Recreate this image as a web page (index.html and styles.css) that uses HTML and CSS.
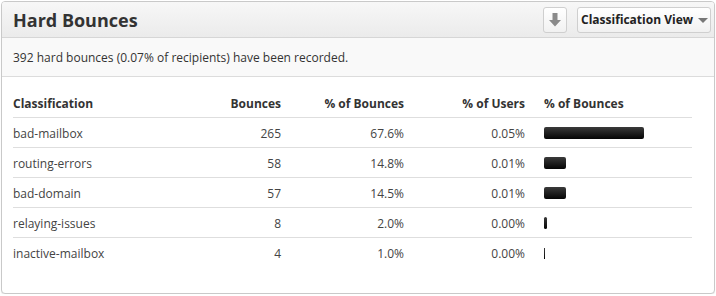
FILE: index.html
```html
<!DOCTYPE html>
<html>
<head>
<meta charset="utf-8">
<link rel="stylesheet" href="styles.css">
</head>
<body>
<div class="card">
  <div class="card-head">
    <h1 class="title">Hard Bounces</h1>
    <div class="actions">
      <button class="btn btn-icon" aria-label="Download">
        <svg width="12" height="14" viewBox="0 0 12 14"><path d="M3.5 0h5v7h3.5L6 13.5 0 7h3.5z" fill="#8a8a8a"/></svg>
      </button>
      <button class="btn btn-drop">Classification View <span class="caret"></span></button>
    </div>
  </div>
  <div class="summary">392 hard bounces (0.07% of recipients) have been recorded.</div>
  <div class="table">
    <div class="row head">
      <div class="c1">Classification</div>
      <div class="c2">Bounces</div>
      <div class="c3">% of Bounces</div>
      <div class="c4">% of Users</div>
      <div class="c5">% of Bounces</div>
    </div>
    <div class="row">
      <div class="c1">bad-mailbox</div><div class="c2">265</div><div class="c3">67.6%</div><div class="c4">0.05%</div>
      <div class="c5"><span class="bar" style="width:100px"></span></div>
    </div>
    <div class="row">
      <div class="c1">routing-errors</div><div class="c2">58</div><div class="c3">14.8%</div><div class="c4">0.01%</div>
      <div class="c5"><span class="bar" style="width:22px"></span></div>
    </div>
    <div class="row">
      <div class="c1">bad-domain</div><div class="c2">57</div><div class="c3">14.5%</div><div class="c4">0.01%</div>
      <div class="c5"><span class="bar" style="width:22px"></span></div>
    </div>
    <div class="row">
      <div class="c1">relaying-issues</div><div class="c2">8</div><div class="c3">2.0%</div><div class="c4">0.00%</div>
      <div class="c5"><span class="bar" style="width:3px"></span></div>
    </div>
    <div class="row last">
      <div class="c1">inactive-mailbox</div><div class="c2">4</div><div class="c3">1.0%</div><div class="c4">0.00%</div>
      <div class="c5"><span class="bar thin" style="width:1px"></span></div>
    </div>
  </div>
</div>
</body>
</html>
```
FILE: styles.css
```css
* { box-sizing: border-box; }
html, body { margin: 0; padding: 0; background: #fff; }
body { font-family: "Open Sans", "DejaVu Sans", sans-serif; font-size: 12px; color: #444; }
.card {
  margin: 1px 2px 0 1px;
  width: 714px;
  height: 293px;
  border: 1px solid #c9c9c9;
  border-radius: 4px;
  background: #fff;
  box-shadow: 0 1px 1px rgba(0,0,0,0.08);
  overflow: hidden;
}
.card-head {
  height: 36px;
  display: flex;
  align-items: center;
  justify-content: space-between;
  padding: 0 3px 0 11px;
  background: linear-gradient(#f7f7f7, #ebebeb);
  border-bottom: 1px solid #d6d6d6;
}
.title { margin: 0; font-size: 18px; font-weight: 700; color: #333; letter-spacing: 0; line-height: 1; padding-top: 1px; }
.actions { display: flex; gap: 10px; align-items: center; }
.btn {
  font-family: inherit;
  height: 26px;
  border: 1px solid #cfcfcf;
  border-radius: 3px;
  background: linear-gradient(#ffffff, #f1f1f1);
  display: flex; align-items: center; justify-content: center;
  padding: 0;
  margin: 0;
}
.btn-icon { width: 24px; }
.btn-drop { width: 134px; font-size: 12px; font-weight: 700; color: #222; gap: 5px; padding-left: 1px; }
.caret { width: 0; height: 0; border-left: 5px solid transparent; border-right: 5px solid transparent; border-top: 5px solid #777; margin-top: 1px; }
.summary {
  height: 39px;
  padding: 0 11px;
  display: flex; align-items: center;
  background: #f9f9f9;
  border-bottom: 1px solid #dcdcdc;
  color: #333;
  padding-top: 1px;
}
.table { padding: 11px 22px 0 11px; }
.row {
  display: grid;
  grid-template-columns: 187px 81px 123px 121px 1fr;
  height: 30px;
  align-items: center;
  border-bottom: 1px solid #dedede;
  padding-top: 1px;
}
.row.last { border-bottom: 0; }
.row.head { font-weight: 700; color: #333; }
.c2, .c3, .c4 { text-align: right; }
.c5 { padding-left: 19px; display: flex; align-items: center; }
.bar {
  display: inline-block;
  height: 12px;
  border-radius: 2px;
  background: linear-gradient(#3a3a3a, #050505);
}
.bar.thin { height: 11px; border-radius: 0; }
```
